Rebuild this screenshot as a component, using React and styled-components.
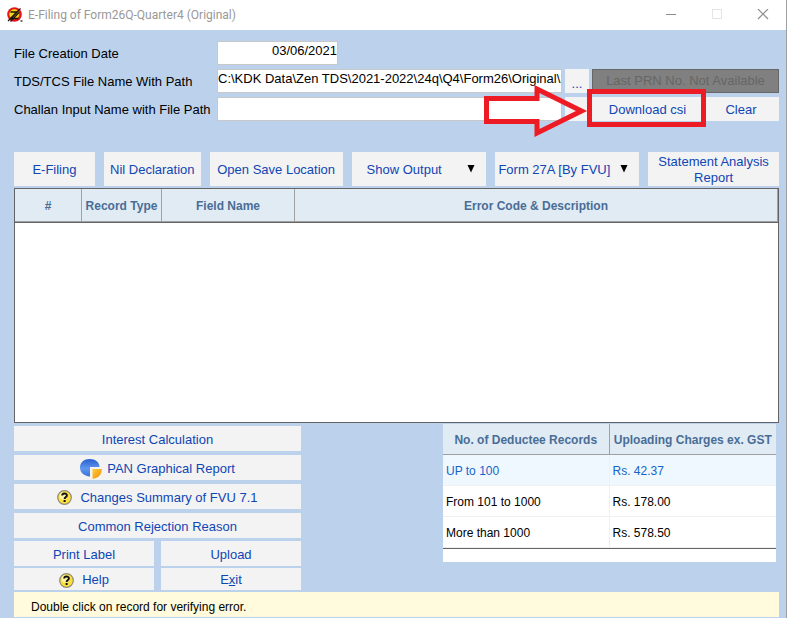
import React, { useState } from 'react'
import styled, { createGlobalStyle } from 'styled-components'

const columns = ['#', 'Record Type', 'Field Name', 'Error Code & Description']

const charges = [
  { records: 'UP to 100', price: 'Rs. 42.37' },
  { records: 'From 101 to 1000', price: 'Rs. 178.00' },
  { records: 'More than 1000', price: 'Rs. 578.50' },
]

const AppIcon = () => (
  <svg width="16" height="16" viewBox="0 0 16 16" aria-hidden="true">
    <circle cx="7.5" cy="7.5" r="7.3" fill="#e8121c" />
    <circle cx="7.3" cy="7.3" r="5" fill="#f5d816" />
    <path d="M3.5 5h6.500L4 11.500h7.500" fill="none" stroke="#1c120c" strokeWidth="1.4" />
    <path d="M1 14L13.500 1.500M3.500 14.500L12 5.500" stroke="#1c120c" strokeWidth="1.3" />
    <path d="M13.5 14h2" stroke="#1c120c" strokeWidth="1.2" />
  </svg>
)

const PieIcon = () => (
  <svg width="22" height="20" viewBox="0 0 22 20" aria-hidden="true">
    <defs>
      <linearGradient id="pieBlue" x1="0" y1="0" x2="0" y2="1">
        <stop offset="0" stopColor="#2b5fd0" />
        <stop offset="0.55" stopColor="#5e97ee" />
        <stop offset="1" stopColor="#3a6fda" />
      </linearGradient>
      <linearGradient id="pieGold" x1="0" y1="0" x2="1" y2="1">
        <stop offset="0" stopColor="#ffcf3a" />
        <stop offset="1" stopColor="#f08a08" />
      </linearGradient>
    </defs>
    <path d="M10 8V17.500C4 17.200 0 13.500 0 8.600C0 3.400 4.200 0 9.800 0C15.400 0 19.500 3.200 19.500 8Z" fill="url(#pieBlue)" />
    <path d="M12.500 10H21.800C21.800 15.500 18.500 19.500 12.500 19.700Z" fill="url(#pieGold)" />
  </svg>
)

const HelpIcon = () => (
  <svg width="15" height="15" viewBox="0 0 15 15" aria-hidden="true">
    <circle cx="7.5" cy="7.5" r="6.8" fill="#fbdf3c" stroke="#8f8a78" strokeWidth="1.2" />
    <circle cx="6.4" cy="6" r="3.8" fill="#fff3a0" />
    <path d="M5.2 5.600C5.200 2.900 9.900 2.900 9.900 5.400C9.900 7 7.600 7 7.600 9" fill="none" stroke="#111" strokeWidth="1.9" />
    <rect x="6.600" y="10" width="2" height="2" fill="#111" />
  </svg>
)

const Arrow = () => (
  <ArrowSvg width="104" height="54" viewBox="0 0 104 54" aria-hidden="true">
    <path
      d="M2.500 15.500H53V6L97.500 28L53 50V38.500H2.500Z"
      fill="none"
      stroke="#ed1c24"
      strokeWidth="5"
    />
  </ArrowSvg>
)

function DropDown({ label, indent }) {
  return (
    <SelectBox>
      <Select aria-label={label} $indent={indent}>
        <option>{label}</option>
      </Select>
      <svg width="8" height="8" viewBox="0 0 8 8" aria-hidden="true">
        <path d="M0.500 0H7.500L4 7.500Z" fill="#000" />
      </svg>
    </SelectBox>
  )
}

export default function App() {
  const [values, setValues] = useState({
    date: '03/06/2021',
    fileName: 'C:\\KDK Data\\Zen TDS\\2021-2022\\24q\\Q4\\Form26\\Original\\2',
    challan: '',
  })

  const handleChange = (e) => {
    setValues({ ...values, [e.target.name]: e.target.value })
  }

  return (
    <Window>
      <GlobalStyle />
      <TitleBar>
        <AppIcon />
        <h1>E-Filing of Form26Q-Quarter4 (Original)</h1>
        <TitleButton type="button" aria-label="Minimize">
          <svg width="12" height="12" viewBox="0 0 12 12">
            <path d="M1 5.500h10" stroke="#8c8c8c" />
          </svg>
        </TitleButton>
        <TitleButton type="button" aria-label="Maximize" disabled>
          <svg width="12" height="12" viewBox="0 0 12 12">
            <rect x="1.500" y="0.500" width="9" height="9" fill="none" stroke="#e4e4e4" />
          </svg>
        </TitleButton>
        <TitleButton type="button" aria-label="Close">
          <svg width="12" height="12" viewBox="0 0 12 12">
            <path d="M1 0l10 10M11 0L1 10" stroke="#8c8c8c" strokeWidth="1.200" />
          </svg>
        </TitleButton>
      </TitleBar>

      <Content>
        <Form>
          <label htmlFor="date">File Creation Date</label>
          <Fields>
            <DateInput id="date" name="date" value={values.date} onChange={handleChange} />
          </Fields>

          <label htmlFor="fileName">TDS/TCS File Name With Path</label>
          <Fields>
            <Input id="fileName" name="fileName" value={values.fileName} onChange={handleChange} />
            <BrowseButton type="button">...</BrowseButton>
            <PrnButton type="button" disabled>Last PRN No. Not Available</PrnButton>
          </Fields>

          <label htmlFor="challan">Challan Input Name with File Path</label>
          <Fields>
            <Input id="challan" name="challan" value={values.challan} onChange={handleChange} />
            <BrowseButton type="button" aria-label="Browse challan file" />
            <Actions>
              <Highlight>
                <Button type="button">Download csi</Button>
                <Arrow />
              </Highlight>
              <Button type="button">Clear</Button>
            </Actions>
          </Fields>
        </Form>

        <Toolbar>
          <Button type="button">E-Filing</Button>
          <Button type="button">Nil Declaration</Button>
          <Button type="button">Open Save Location</Button>
          <DropDown label="Show Output" indent={15} />
          <DropDown label="Form 27A [By FVU]" indent={3} />
          <Button type="button">Statement Analysis Report</Button>
        </Toolbar>

        <ErrorPanel>
          <ErrorTable>
            <colgroup>
              <col width="67" />
              <col width="80" />
              <col width="133" />
              <col />
            </colgroup>
            <thead>
              <tr>
                {columns.map((name) => (
                  <th key={name}>{name}</th>
                ))}
              </tr>
            </thead>
          </ErrorTable>
        </ErrorPanel>

        <Bottom>
          <Menu>
            <MenuGroup>
              <Button type="button">Interest Calculation</Button>
              <Button type="button" $gap={5}><PieIcon />PAN Graphical Report</Button>
              <Button type="button" $gap={8}><HelpIcon />Changes Summary of FVU 7.1</Button>
              <Button type="button">Common Rejection Reason</Button>
            </MenuGroup>
            <MenuPairs>
              <Button type="button">Print Label</Button>
              <Button type="button">Upload</Button>
              <Button type="button" $gap={8}><HelpIcon />Help</Button>
              <Button type="button"><span>E<u>x</u>it</span></Button>
            </MenuPairs>
          </Menu>

          <ChargesPanel>
            <ChargesTable>
              <thead>
                <tr>
                  <th>No. of Deductee Records</th>
                  <th>Uploading Charges ex. GST</th>
                </tr>
              </thead>
              <tbody>
                {charges.map((row, i) => (
                  <ChargeRow key={row.records} $selected={i === 0}>
                    <td>{row.records}</td>
                    <td>{row.price}</td>
                  </ChargeRow>
                ))}
              </tbody>
            </ChargesTable>
          </ChargesPanel>
        </Bottom>

        <StatusBar>Double click on record for verifying error.</StatusBar>
      </Content>
    </Window>
  )
}

const GlobalStyle = createGlobalStyle`
  * {
    box-sizing: border-box;
  }
  body {
    margin: 0;
    background: #fff;
    color: #000;
    font-family: 'Liberation Sans', Arial, sans-serif;
    font-size: 13px;
  }
  button, input, select {
    font: inherit;
  }
`

const Window = styled.div`
  display: flex;
  flex-direction: column;
  min-height: 100vh;
  margin-right: 2px;
  border-right: 1px solid #a0a0a0;
  background: #bbd1ec;
`

const TitleBar = styled.header`
  display: flex;
  align-items: center;
  height: 30px;
  padding-left: 7px;
  background: #fff;
  h1 {
    flex: 1;
    margin: 0 0 0 5px;
    color: #999;
    font-family: Roboto, 'Open Sans', sans-serif;
    font-size: 12px;
    font-weight: 400;
  }
`

const TitleButton = styled.button`
  display: flex;
  align-items: center;
  justify-content: center;
  width: 46px;
  height: 30px;
  padding: 0;
  border: 0;
  background: transparent;
`

const Content = styled.main`
  display: flex;
  flex: 1;
  flex-direction: column;
  padding: 11px 7px 1px 14px;
`

const Form = styled.form`
  display: grid;
  grid-template-columns: 203px 1fr;
  row-gap: 4px;
  align-items: center;
  margin-bottom: 31px;
  label {
    white-space: nowrap;
  }
`

const Fields = styled.div`
  display: flex;
  gap: 3px;
  height: 24px;
`

const Input = styled.input`
  flex: 1;
  min-width: 0;
  padding: 0 0 5px;
  border: 1px solid #c8c8c8;
  border-radius: 0;
  background: #fff;
  color: #000;
`

const DateInput = styled(Input)`
  flex: none;
  width: 121px;
  text-align: right;
`

const Button = styled.button`
  display: flex;
  align-items: center;
  justify-content: center;
  gap: ${({ $gap }) => $gap || 0}px;
  padding: 2px 0 0;
  border: 0;
  background: #f3f3f3;
  color: #0f46b4;
  line-height: 16px;
`

const BrowseButton = styled(Button)`
  width: 24px;
  padding-top: 6px;
`

const PrnButton = styled(Button)`
  width: 187px;
  padding: 0;
  border: 1px solid #666;
  background: #808080;
  color: #666;
`

const Actions = styled.div`
  display: grid;
  grid-template-columns: 111px 76px;
  width: 187px;
`

const Highlight = styled.div`
  position: relative;
  display: grid;
  &::after {
    content: '';
    position: absolute;
    inset: -8px -3px -6px -5px;
    border: 5px solid #ed1c24;
    pointer-events: none;
  }
`

const ArrowSvg = styled.svg`
  position: absolute;
  top: -14px;
  left: -108px;
  pointer-events: none;
`

const Toolbar = styled.div`
  display: grid;
  grid-template-columns: 81fr 97fr 133fr 135fr 144fr 131fr;
  column-gap: 9px;
  height: 34px;
  margin-bottom: 2px;
`

const SelectBox = styled.div`
  position: relative;
  display: grid;
  svg {
    position: absolute;
    top: 13px;
    right: 11px;
    pointer-events: none;
  }
`

const Select = styled.select`
  appearance: none;
  min-width: 0;
  padding: 0 0 0 ${({ $indent }) => $indent}px;
  border: 0;
  border-radius: 0;
  background: #f3f3f3;
  color: #0f46b4;
`

const ErrorPanel = styled.section`
  flex: 1;
  min-height: 200px;
  border: 1px solid #646464;
  background: #fff;
`

const ErrorTable = styled.table`
  width: 100%;
  table-layout: fixed;
  border-collapse: separate;
  border-spacing: 0;
  border-bottom: 1px solid #646464;
  th {
    height: 33px;
    padding: 2px 0 0;
    border-right: 1px solid #a0a0a0;
    border-bottom: 1px solid #a0a0a0;
    background: #e0ebf4;
    color: #4a6d96;
    font-size: 12px;
  }
`

const Bottom = styled.div`
  display: flex;
  justify-content: space-between;
  align-items: flex-start;
  padding: 1px 3px 2px 0;
`

const Menu = styled.nav`
  display: grid;
  gap: 3px;
  width: 287px;
  padding-top: 2px;
`

const MenuGroup = styled.div`
  display: grid;
  grid-auto-rows: 25px;
  gap: 4px;
`

const MenuPairs = styled.div`
  display: grid;
  grid-template-columns: 1fr 1fr;
  grid-template-rows: 25px 22px;
  gap: 2px 7px;
`

const ChargesPanel = styled.section`
  width: 333px;
  padding-bottom: 13px;
  background: #fff;
`

const ChargesTable = styled.table`
  width: 100%;
  table-layout: fixed;
  border-collapse: separate;
  border-spacing: 0;
  border-bottom: 1px solid #646464;
  font-size: 12px;
  th {
    height: 31px;
    padding: 2px 0 0;
    border-bottom: 1px solid #a0a0a0;
    background: #e0ebf4;
    color: #4a6d96;
    white-space: nowrap;
  }
  th:first-child {
    border-right: 1px solid #a0a0a0;
  }
`

const ChargeRow = styled.tr`
  background: ${({ $selected }) => ($selected ? '#f0f8ff' : '#fff')};
  color: ${({ $selected }) => ($selected ? '#1464c8' : '#000')};
  td {
    height: 31px;
    padding: 2px 3px 0;
    border-bottom: 1px solid #f0f0f0;
  }
  td:first-child {
    border-right: 1px solid #f0f0f0;
  }
`

const StatusBar = styled.footer`
  height: 25px;
  padding: 4px 17px 0;
  background: #fffbdc;
  font-size: 12px;
  line-height: 22px;
`
